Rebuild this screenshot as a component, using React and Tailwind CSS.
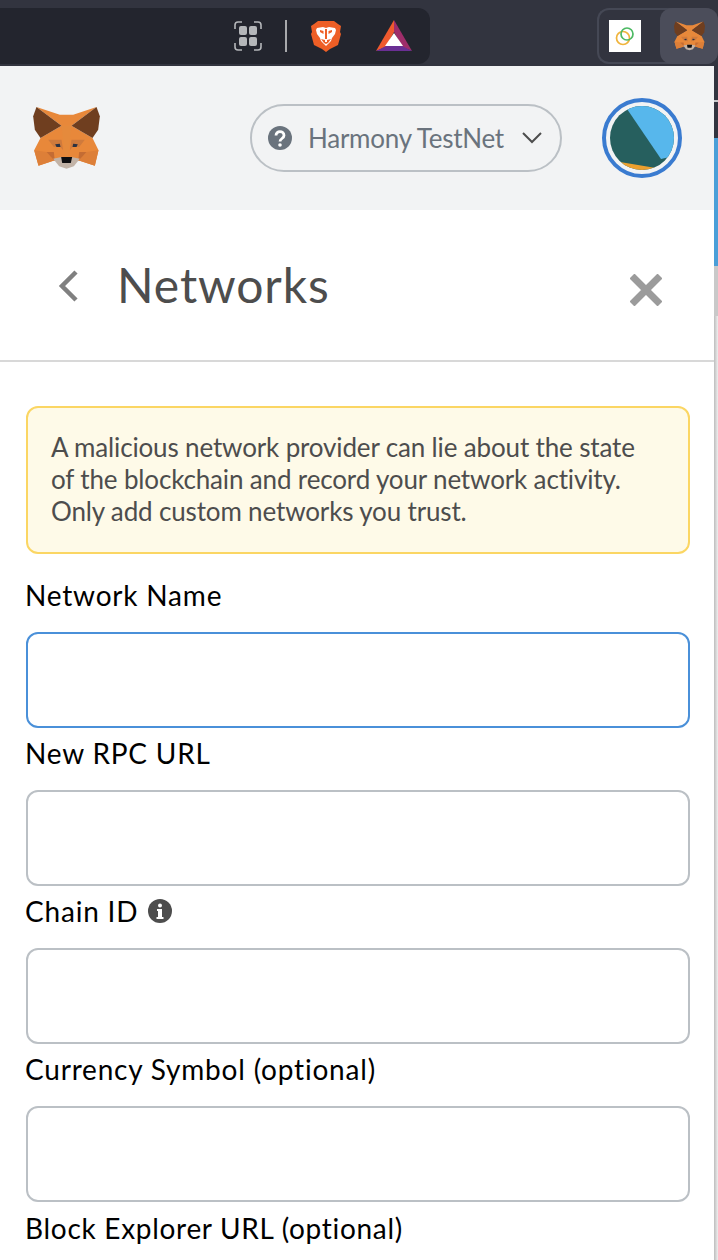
import React from "react";

function Fox({ className }) {
  return (
    <svg viewBox="0 0 200 186" className={className}>
      <polygon fill="#e8883a" points="10,0 80,23 120,23 190,0 115,56 178,93 196,130 185,176 135,160 100,165 65,160 16,176 3,130 22,93 85,56" />
      <polygon fill="#6f3e1f" points="10,0 85,56 22,93 5,68 0,28" />
      <polygon fill="#6f3e1f" points="190,0 115,56 178,93 195,68 200,28" />
      <polygon fill="#e58a3c" points="85,56 115,56 105,150 95,150" />
      <polygon fill="#cf7a3c" points="45,98 85,98 90,130 80,118 62,120" />
      <polygon fill="#cf7a3c" points="155,98 115,98 110,130 120,118 138,120" />
      <polygon fill="#dd7f38" points="3,130 40,135 65,160 16,176" />
      <polygon fill="#dd7f38" points="196,130 160,135 135,160 185,176" />
      <polygon fill="#c46c33" points="40,135 62,135 65,162" />
      <polygon fill="#c46c33" points="160,135 138,135 135,162" />
      <polygon fill="#c2b3a7" points="60,155 85,150 115,150 140,155 122,178 100,185 78,178" />
      <polygon fill="#0e0e10" points="84,150 117,150 113,168 87,168" />
      <polygon fill="#2c3242" points="66,112 80,110 82,120 70,120" />
      <polygon fill="#2c3242" points="134,112 120,110 118,120 130,120" />
    </svg>
  );
}

function Brave() {
  return (
    <svg viewBox="0 0 32 32" className="w-[32px] h-[32px]">
      <path fill="#ee5f26" d="M8 1h16l4 3 3 2-1 6 1 2-3 11-8 4-4 3-4-3-8-4L1 14l1-2-1-6 3-2z" />
      <path fill="#fff" d="M7 8l6-1 3 1 3-1 6 1 1 2-1 4-3 4-1 3-3 3-2 2-2-2-3-3-1-3-3-4-1-4z" />
      <path fill="#ee5f26" d="M10 10l3.500 1v3l-3.500-2zM22 10l-3.500 1v3l3.500-2zM15 9h2v10h-2zM11 19l4 1v2h2v-2l4-1-3 4-2 1-2-1z" />
    </svg>
  );
}

function Bat() {
  return (
    <svg viewBox="0 0 36 32" className="w-[36px] h-[32px]">
      <polygon fill="#ef5a2e" points="18,0 0,31 10,27 18,12" />
      <polygon fill="#9e2d6a" points="18,0 36,31 26,27 18,12" />
      <polygon fill="#6a2f94" points="0,31 36,31 26,26 10,26" />
      <polygon fill="#fff" points="18,13 27,26 9,26" />
    </svg>
  );
}

function GridIcon() {
  return (
    <svg viewBox="0 0 28 30" fill="none" className="w-[28px] h-[30px]">
      <path stroke="#b5b7ba" strokeWidth="1.600" d="M1 8V4q0-3 3-3h4M20 1h4q3 0 3 3v4M27 22v4q0 3-3 3h-4M8 29H4q-3 0-3-3v-4" />
      <rect x="5" y="5" width="8" height="9" rx="2" fill="#b5b7ba" />
      <rect x="15" y="5" width="8" height="9" rx="2" fill="#b5b7ba" />
      <rect x="5" y="16" width="8" height="9" rx="2" fill="#b5b7ba" />
      <rect x="15" y="16" width="8" height="9" rx="2" fill="#b5b7ba" />
    </svg>
  );
}

function Avatar() {
  return (
    <svg viewBox="0 0 64 64" className="w-[64px] h-[64px] rounded-full">
      <rect width="64" height="64" fill="#265f5e" />
      <polygon fill="#57b7ec" points="15,0 64,0 64,50 51,53" />
      <polygon fill="#eca02e" points="10,56 46,62 46,64 15,64" />
    </svg>
  );
}

function Field({ label, info, first }) {
  return (
    <div className="flex flex-col">
      <div className={`flex items-center gap-[10px] text-[28px] tracking-[0.8px] text-black -ml-[1px] ${first ? "h-[63px] pb-[11px]" : "h-[62px] pb-[12px]"}`}>
        <span>{label}</span>
        {info && (
          <svg viewBox="0 0 24 24" className="w-[24px] h-[24px]">
            <circle cx="12" cy="12" r="12" fill="#4d4d4d" />
            <circle cx="12" cy="6.500" r="2" fill="#fff" />
            <path fill="#fff" d="M9 10h5v8h1.500v2h-7v-2H10v-6H9z" />
          </svg>
        )}
      </div>
      <div className={`h-[96px] rounded-[12px] border-2 bg-white ml-0 ${first ? "border-[#4a90d9]" : "border-[#bbc0c5]"}`} />
    </div>
  );
}

export default function App() {
  return (
    <div className="w-[718px] h-[1260px] overflow-hidden flex flex-col bg-white font-['Lato','Liberation_Sans',sans-serif]">
      <div className="h-[66px] shrink-0 bg-[#32343f] flex items-end pb-[2px] justify-between">
        <div className="w-[430px] h-[56px] bg-[#23252e] rounded-r-[12px] flex items-center justify-end">
          <GridIcon />
          <div className="w-[2px] h-[32px] bg-[#a8a9ac] ml-[23px] mr-[23px]" />
          <Brave />
          <div className="ml-[34px] mr-[18px]"><Bat /></div>
        </div>
        <div className="w-[121px] h-[56px] border-2 border-r-0 border-[#454855] rounded-[12px] flex items-center">
          <div className="ml-[10px] w-[32px] h-[32px] bg-white flex items-center justify-center">
            <svg viewBox="0 0 24 24" fill="none" strokeWidth="1.700" className="w-[24px] h-[24px]">
              <circle cx="10" cy="14" r="6.500" stroke="#f0b43c" />
              <circle cx="14" cy="10" r="6" stroke="#4cb963" />
            </svg>
          </div>
          <div className="ml-[19px] w-[58px] h-[56px] -my-[2px] rounded-[12px] bg-[#4b4d5a] flex items-center justify-center">
            <Fox className="w-[31px] h-[30px]" />
          </div>
        </div>
      </div>
      <div className="flex flex-1 min-h-0">
        <div className="w-[714px] flex flex-col">
          <div className="h-[144px] shrink-0 bg-[#f2f3f4] flex items-center pl-[33px] pr-[32px]">
            <Fox className="w-[67px] h-[62px]" />
            <div className="ml-[150px] w-[312px] h-[68px] rounded-[34px] border-2 border-[#bbc0c5] flex items-center pl-[16px] text-[#6a737d]">
              <svg viewBox="0 0 24 24" className="w-[24px] h-[24px] shrink-0">
                <circle cx="12" cy="12" r="12" fill="#6a737d" />
                <path fill="none" stroke="#fff" strokeWidth="2.800" d="M8 9.500c0-5.200 8-5 8 0 0 3-4 3-4 6" />
                <circle cx="12" cy="19" r="1.800" fill="#fff" />
              </svg>
              <span className="ml-[16px] text-[26px] tracking-[-0.25px] whitespace-nowrap">Harmony TestNet</span>
              <svg viewBox="0 0 20 12" fill="none" className="w-[20px] h-[12px] ml-auto mr-[18px]">
                <path stroke="#4d4d4d" strokeWidth="2" d="M1 1l9 9 9-9" />
              </svg>
            </div>
            <div className="ml-[40px] w-[80px] h-[80px] rounded-full border-4 border-[#3a7bd0] flex items-center justify-center">
              <Avatar />
            </div>
          </div>
          <div className="h-[152px] shrink-0 border-b-2 border-[#d8d8d8] flex items-center pl-[58px] pr-[52px]">
            <svg viewBox="0 0 20 32" fill="none" className="w-[20px] h-[32px] mt-[2px]">
              <path stroke="#808080" strokeWidth="4.500" d="M18 2L4 16l14 14" />
            </svg>
            <h1 className="ml-[39px] text-[48px] text-[#4d4d4d] tracking-[0.9px]">Networks</h1>
            <svg viewBox="0 0 32 32" className="w-[32px] h-[32px] ml-auto mt-[10px]">
              <path stroke="#9b9b9b" strokeWidth="7" d="M2 2l28 28M30 2L2 30" />
            </svg>
          </div>
          <div className="pl-[26px] pr-[24px] pt-[44px] flex flex-col">
            <div className="h-[148px] rounded-[12px] border-2 border-[#fbd663] bg-[#fefae8] pl-[23px] pr-[30px] pt-[23px] text-[26px] leading-[32px] tracking-[-0.15px] text-[#4d4d4d]">
              A malicious network provider can lie about the state of the blockchain and record your network activity. Only add custom networks you trust.
            </div>
            <div className="mt-[15px]">
              <Field first label="Network Name" />
              <Field label="New RPC URL" />
              <Field label="Chain ID" info />
              <Field label="Currency Symbol (optional)" />
              <div className="pt-[5px] -ml-[1px] text-[28px] tracking-[0.7px] text-black whitespace-nowrap">Block Explorer URL (optional)</div>
            </div>
          </div>
        </div>
        <div className="w-[4px] flex flex-col">
          <div className="h-[34px] bg-[#32343f]" />
          <div className="h-[2px] bg-[#c9c9cc]" />
          <div className="h-[36px] bg-[#32343f]" />
          <div className="h-[128px] bg-[#4a9fd8]" />
          <div className="h-[50px] bg-[#c9c9c9]" />
          <div className="flex-1 bg-gradient-to-r from-[#bdbdbd] to-[#efefef]" />
        </div>
      </div>
    </div>
  );
}
